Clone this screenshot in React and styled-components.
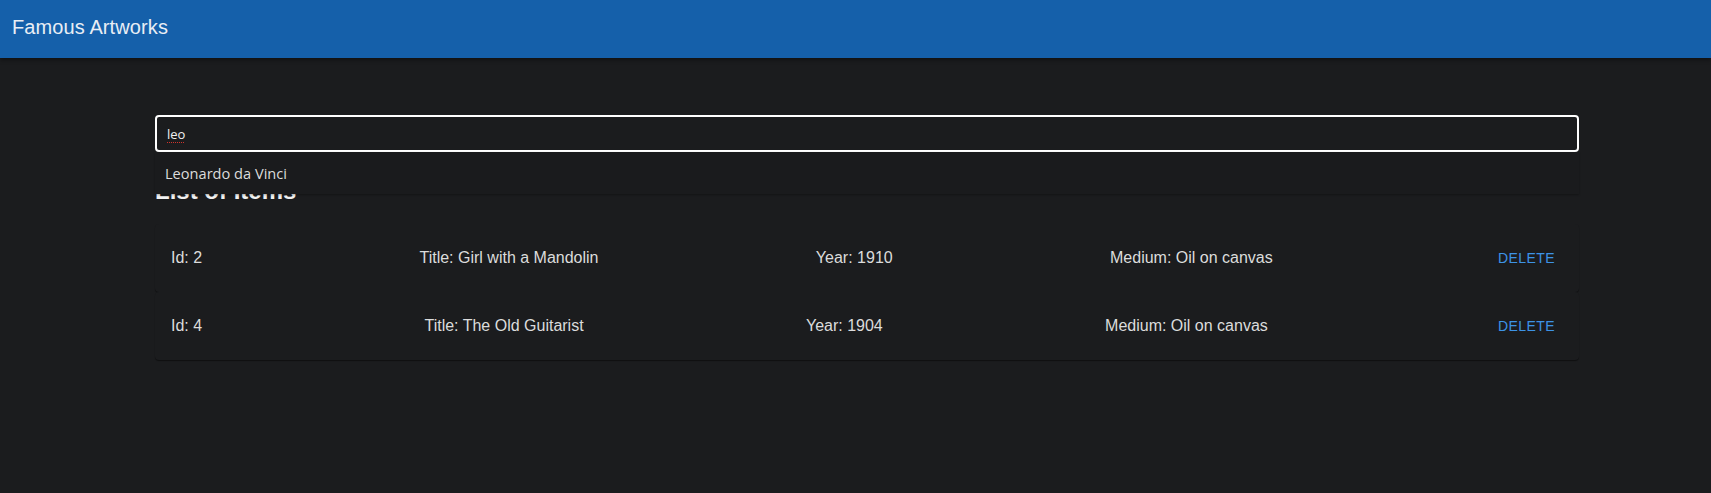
import React, { useState } from "react";
import styled, { createGlobalStyle } from "styled-components";

const GlobalStyle = createGlobalStyle`
    html, body {
        margin: 0;
        padding: 0;
        background-color: #1b1c1e;
        font-family: "Liberation Sans", Arial, sans-serif;
    }
`;

const Page = styled.div`
    min-height: 493px;
    background-color: #1b1c1e;
`;

const AppBar = styled.header`
    height: 58px;
    background-color: #1560aa;
    display: flex;
    align-items: center;
    padding: 0 12px;
    box-sizing: border-box;
    box-shadow: 0 2px 4px rgba(0,0,0,0.4);
`;

const AppTitle = styled.h1`
    margin: 0 0 3px 0;
    font-size: 20px;
    font-weight: 400;
    color: #e9eef5;
    letter-spacing: 0.1px;
`;

const Main = styled.main`
    padding: 57px 132px 0 155px;
`;

const SearchWrap = styled.div`
    position: relative;
`;

const SearchInput = styled.input`
    display: block;
    width: 100%;
    height: 37px;
    box-sizing: border-box;
    background-color: #1b1c1e;
    border: 2px solid #ffffff;
    border-radius: 4px;
    padding: 0 10px;
    color: #f0f0f0;
    font-family: "Open Sans", "Noto Sans", sans-serif;
    font-size: 13px;
    outline: none;
    text-decoration: underline dotted #d0342c;
    text-underline-offset: 3px;
    text-decoration-thickness: 1px;
`;

/* native-looking datalist popup, lies over the heading */
const Suggestions = styled.ul`
    position: absolute;
    top: 37px;
    left: 0;
    right: 0;
    margin: 0;
    padding: 0;
    list-style: none;
    background-color: #1a1b1d;
    box-shadow: 0 1px 2px rgba(0,0,0,0.3);
    z-index: 2;
`;

const Suggestion = styled.li`
    height: 42px;
    display: flex;
    align-items: center;
    padding: 0 10px;
    font-family: "Open Sans", "Noto Sans", sans-serif;
    font-size: 14.6px;
    color: #dcdcdc;
`;

const Heading = styled.h2`
    margin: 23px 0 17px 0;
    font-size: 24px;
    line-height: 32px;
    font-weight: 700;
    color: #f2f2f2;
`;

const List = styled.ul`
    margin: 0;
    padding: 0;
    list-style: none;
`;

const Row = styled.li`
    height: 68px;
    display: flex;
    align-items: center;
    justify-content: space-between;
    padding: 0 16px;
    background-color: #1b1c1e;
    border-radius: 4px;
    box-shadow: 0 1px 1px rgba(0,0,0,0.45);
    font-size: 16px;
    color: #dcdcdc;
`;

const Cell = styled.span`
    white-space: nowrap;
`;

const DeleteButton = styled.button`
    background: transparent;
    border: none;
    border-radius: 4px;
    padding: 6px 8px;
    min-width: 64px;
    font-family: "Liberation Sans", Arial, sans-serif;
    font-size: 14px;
    letter-spacing: 0.4px;
    text-transform: uppercase;
    color: #3d93e6;
    cursor: pointer;
    &:hover { background-color: rgba(61,147,230,0.08); }
`;

const artworks = [
    { id: 2, title: "Girl with a Mandolin", year: 1910, medium: "Oil on canvas" },
    { id: 4, title: "The Old Guitarist", year: 1904, medium: "Oil on canvas" },
];

export default function App() {
    const [query, setQuery] = useState("leo");
    const [items, setItems] = useState(artworks);

    return (
        <Page>
            <GlobalStyle />
            <AppBar>
                <AppTitle>Famous Artworks</AppTitle>
            </AppBar>
            <Main>
                <SearchWrap>
                    <SearchInput value={query} onChange={(e) => setQuery(e.target.value)} />
                    <Suggestions>
                        <Suggestion>Leonardo da Vinci</Suggestion>
                    </Suggestions>
                </SearchWrap>
                <Heading>List of Items</Heading>
                <List>
                    {items.map((item) => (
                        <Row key={item.id}>
                            <Cell>Id: {item.id}</Cell>
                            <Cell>Title: {item.title}</Cell>
                            <Cell>Year: {item.year}</Cell>
                            <Cell>Medium: {item.medium}</Cell>
                            <DeleteButton onClick={() => setItems(items.filter((a) => a.id !== item.id))}>
                                Delete
                            </DeleteButton>
                        </Row>
                    ))}
                </List>
            </Main>
        </Page>
    );
}
